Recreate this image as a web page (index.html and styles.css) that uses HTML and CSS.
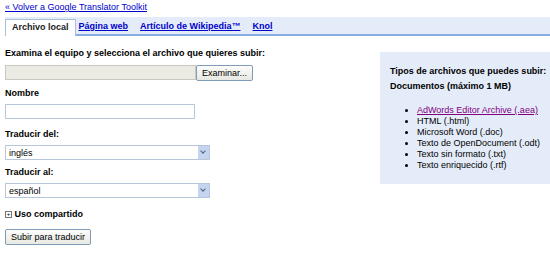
FILE: index.html
```html
<!DOCTYPE html>
<html lang="es">
<head>
  <meta charset="UTF-8">
  <title>Subir documento</title>
  <link rel="stylesheet" href="styles.css">
</head>
<body>

  <div class="volver"><a href="#">« Volver a Google Translator Toolkit</a></div>

  <div class="pestanas">
    <span class="pestana activa">Archivo local</span>
    <a class="pestana" href="#">Página web</a>
    <a class="pestana" href="#">Artículo de Wikipedia™</a>
    <a class="pestana" href="#">Knol</a>
  </div>

  <div class="contenido">
    <div class="formulario">
      <label class="titulo">Examina el equipo y selecciona el archivo que quieres subir:</label>
      <div class="fila-archivo">
        <span class="campo-archivo"></span>
        <button class="boton">Examinar...</button>
      </div>

      <label class="titulo">Nombre</label>
      <input type="text" class="campo-texto">

      <label class="titulo">Traducir del:</label>
      <div class="selector"><span>inglés</span><i class="flecha"></i></div>

      <label class="titulo">Traducir al:</label>
      <div class="selector"><span>español</span><i class="flecha"></i></div>

      <div class="titulo compartido"><span class="mas">+</span> Uso compartido</div>

      <button class="boton subir">Subir para traducir</button>
    </div>

    <div class="tipos">
      <p class="titulo">Tipos de archivos que puedes subir:</p>
      <p class="titulo">Documentos (máximo 1 MB)</p>
      <ul>
        <li><a href="#">AdWords Editor Archive (.aea)</a></li>
        <li>HTML (.html)</li>
        <li>Microsoft Word (.doc)</li>
        <li>Texto de OpenDocument (.odt)</li>
        <li>Texto sin formato (.txt)</li>
        <li>Texto enriquecido (.rtf)</li>
      </ul>
    </div>
  </div>

</body>
</html>
```

FILE: styles.css
```css
body {
  margin: 0;
  font-family: 'Liberation Sans', Arial, sans-serif;
  font-size: 9px;
  color: #000;
  background: #fff;
}

a {
  color: #00c;
}

.volver {
  padding: 2px 5px 0;
  height: 15px;
  line-height: 11px;
}

.pestanas {
  margin-left: 5px;
  height: 15px;
  padding-top: 2px;
  background: #e5ecf9;
  border-bottom: 2px solid #88aee0;
  display: flex;
  align-items: flex-end;
}

.pestana {
  font-weight: bold;
  padding: 0 6px;
  height: 15px;
  line-height: 15px;
}

.pestana.activa {
  background: #fff;
  border: 1px solid #a9bfd6;
  border-bottom: none;
  height: 16px;
  margin-bottom: -2px;
  margin-right: -3px;
  color: #222;
}

.contenido {
  display: flex;
  justify-content: space-between;
  padding-left: 5px;
  margin-top: 11px;
}

.formulario {
  width: 300px;
}

.titulo {
  display: block;
  font-weight: bold;
  margin: 0;
  line-height: 12px;
}

.fila-archivo {
  display: flex;
  margin: 6px 0 6px;
}

.campo-archivo {
  width: 189px;
  height: 13px;
  background: #ebebe4;
  border: 1px solid #c8c8c0;
}

.boton {
  font-family: 'Liberation Sans', Arial, sans-serif;
  font-size: 9px;
  height: 16px;
  padding: 0 5px;
  background: linear-gradient(#fcfcfb, #e8e8e2);
  border: 1px solid #7f9db9;
  border-radius: 2px;
  color: #000;
}

.campo-texto {
  display: block;
  width: 190px;
  height: 15px;
  box-sizing: border-box;
  border: 1px solid #b7c7db;
  margin: 5px 0 9px;
  padding: 0;
}

.selector {
  width: 205px;
  height: 15px;
  box-sizing: border-box;
  border: 1px solid #b7c7db;
  margin: 5px 0 6px;
  display: flex;
  justify-content: space-between;
  align-items: center;
  padding-left: 3px;
}

.flecha {
  width: 11px;
  height: 13px;
  background: #c6d5ef;
  position: relative;
}

.flecha::after {
  content: "";
  position: absolute;
  left: 3px;
  top: 3px;
  width: 3px;
  height: 3px;
  border-right: 1px solid #4d6185;
  border-bottom: 1px solid #4d6185;
  transform: rotate(45deg);
}

.compartido {
  margin-top: 10px;
}

.mas {
  display: inline-block;
  width: 5px;
  height: 5px;
  border: 1px solid #777;
  font-size: 6px;
  line-height: 5px;
  text-align: center;
  font-weight: normal;
  vertical-align: 1px;
}

.subir {
  margin-top: 9px;
  height: 16px;
}

.tipos {
  width: 170px;
  height: 132px;
  box-sizing: border-box;
  background: #e5ecf9;
  padding: 12px 0 0 10px;
  margin-top: 5px;
  white-space: nowrap;
}

.tipos .titulo {
  line-height: 15px;
}

.tipos ul {
  margin: 11px 0 0;
  padding-left: 27px;
  line-height: 11px;
}

.tipos a {
  color: #800080;
}
```
